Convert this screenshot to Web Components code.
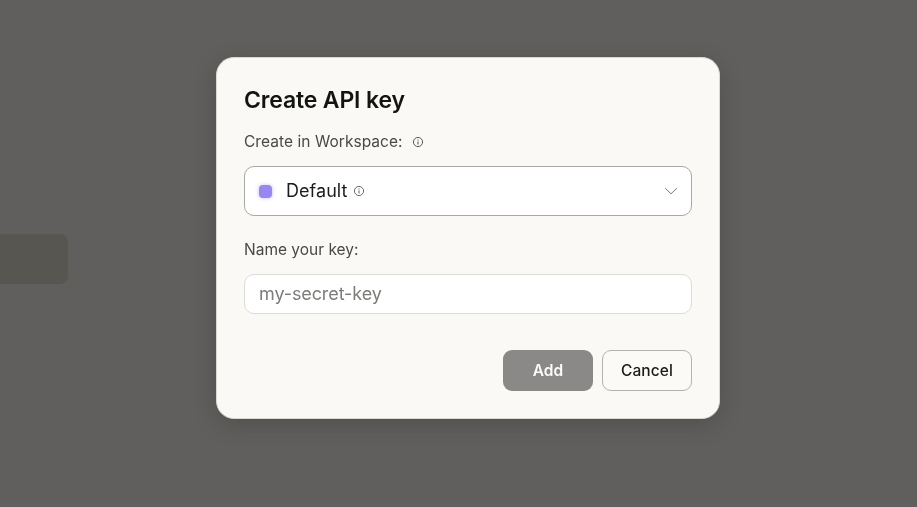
<!DOCTYPE html>
<html>
<head>
<meta charset="utf-8">
<title>Create API key</title>
<style>
  html, body { margin: 0; height: 100%; overflow: hidden; background: #605f5d; }
  body { font-family: "Inter", "Liberation Sans", sans-serif; }
</style>
</head>
<body>
<bg-page></bg-page>
<modal-scrim>
  <key-dialog></key-dialog>
</modal-scrim>

<script>
const infoIcon = (size) => `
  <svg width="${size}" height="${size}" viewBox="0 0 12 12" fill="none" stroke="currentColor" stroke-width="1" aria-hidden="true">
    <circle cx="6" cy="6" r="4.6"/>
    <path d="M6 5.5V8.4" stroke-width="1.1"/>
    <path d="M6 3.4V4.4" stroke-width="1.1"/>
  </svg>`;

class BgPage extends HTMLElement {
  constructor() {
    super();
    this.attachShadow({ mode: 'open' });
    this.shadowRoot.innerHTML = `
      <style>
        :host { display: block; height: 507px; padding-top: 234px; box-sizing: border-box; }
        .chip { width: 68px; height: 50px; background: #575651; border-radius: 0 8px 8px 0; }
      </style>
      <div class="chip"></div>
    `;
  }
}

class ModalScrim extends HTMLElement {
  constructor() {
    super();
    this.attachShadow({ mode: 'open' });
    this.shadowRoot.innerHTML = `
      <style>
        :host { display: block; position: fixed; inset: 0; padding: 57px 0 0 216px; box-sizing: border-box; }
      </style>
      <slot></slot>
    `;
  }
}

class WorkspaceSelect extends HTMLElement {
  constructor() {
    super();
    this.attachShadow({ mode: 'open' });
    this.shadowRoot.innerHTML = `
      <style>
        :host { display: block; }
        .box {
          display: flex; align-items: center; height: 50px; box-sizing: border-box;
          padding: 0 13px 0 14px; background: #fff;
          border: 1px solid #a9a8a4; border-radius: 10px; color: #1d1c1a;
        }
        .dot {
          width: 13px; height: 13px; border-radius: 4px; background: #9a85f5;
          box-shadow: 0 0 4px #c9bffa; margin-right: 14px; flex: none;
        }
        .label { font-size: 18px; line-height: 24px; letter-spacing: 0.05px; }
        .info { display: flex; margin-left: 6px; color: #6c6b67; }
        .chev { margin-left: auto; display: flex; color: #7a7975; }
      </style>
      <div class="box">
        <span class="dot"></span>
        <span class="label">Default</span>
        <span class="info">${infoIcon(12)}</span>
        <span class="chev">
          <svg width="14" height="8" viewBox="0 0 14 8" fill="none" stroke="currentColor" stroke-width="1"><path d="M1.2 1.2L7 6.8L12.8 1.2"/></svg>
        </span>
      </div>
    `;
  }
}

class KeyDialog extends HTMLElement {
  constructor() {
    super();
    this.attachShadow({ mode: 'open' });
    this.shadowRoot.innerHTML = `
      <style>
        :host {
          display: block; width: 504px; height: 362px; box-sizing: border-box;
          padding: 28px 27px 0 27px; background: #faf9f5;
          border: 1px solid #d9d8d3; border-radius: 18px;
          box-shadow: 0 6px 24px rgba(0,0,0,0.16);
          color: #45443f;
        }
        h2 { margin: 0; font-size: 23px; line-height: 28px; font-weight: 600; color: #141413; letter-spacing: -0.15px; }
        .lab { font-size: 15.5px; line-height: 20px; color: #4a4945; }
        .row1 { display: flex; align-items: center; margin-top: 18px; margin-bottom: 14px; letter-spacing: 0.05px; }
        .row1 .info { display: flex; margin-left: 9px; color: #5c5b57; }
        .row2 { margin-top: 24px; margin-bottom: 14px; }
        .input {
          height: 40px; box-sizing: border-box; display: flex; align-items: center;
          padding: 0 14px 1px; background: #fff; border: 1px solid #dedcd7; border-radius: 10px;
          font-size: 18px; color: #7d7c78; letter-spacing: -0.1px;
        }
        .actions { display: flex; justify-content: flex-end; gap: 9px; margin-top: 36px; }
        .btn {
          width: 90px; height: 41px; box-sizing: border-box; border-radius: 9px;
          display: flex; align-items: center; justify-content: center;
          font-size: 15.5px; font-weight: 500;
        }
        .add { background: #8a8987; color: #fbfbf9; font-weight: 600; }
        .cancel { background: #fbfaf7; border: 1px solid #b4b3ae; color: #1a1a18; letter-spacing: 0.1px; }
      </style>
      <h2>Create API key</h2>
      <div class="lab row1">Create in Workspace:<span class="info">${infoIcon(12)}</span></div>
      <workspace-select></workspace-select>
      <div class="lab row2">Name your key:</div>
      <div class="input">my-secret-key</div>
      <div class="actions">
        <div class="btn add">Add</div>
        <div class="btn cancel">Cancel</div>
      </div>
    `;
  }
}

customElements.define('bg-page', BgPage);
customElements.define('modal-scrim', ModalScrim);
customElements.define('workspace-select', WorkspaceSelect);
customElements.define('key-dialog', KeyDialog);
</script>
</body>
</html>
